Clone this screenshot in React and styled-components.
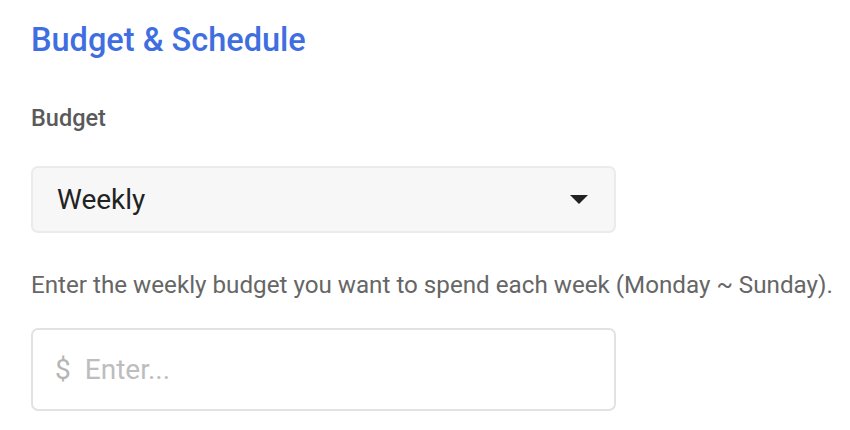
import React from 'react';
import styled, { createGlobalStyle } from 'styled-components';

const GlobalStyle = createGlobalStyle`
  body {
    margin: 0;
    background: #fff;
    font-family: Roboto, "Liberation Sans", sans-serif;
  }
`;

const Section = styled.div`
  padding: 20px 31px;
  display: flex;
  flex-direction: column;
`;

const Title = styled.h2`
  margin: 0;
  font-size: 32.5px;
  font-weight: 500;
  color: #3f6ee0;
  line-height: 40px;
`;

const Label = styled.div`
  margin-top: 46px;
  font-size: 23.5px;
  font-weight: 500;
  color: #5a5a5a;
  line-height: 24px;
`;

const Select = styled.div`
  margin-top: 36px;
  width: 585px;
  height: 67px;
  box-sizing: border-box;
  display: flex;
  align-items: center;
  justify-content: space-between;
  padding: 0 26px 0 24px;
  background: #f7f7f7;
  border: 2px solid #ebebeb;
  border-radius: 7px;
  font-size: 28px;
  color: #222;
`;

const Caret = styled.span`
  width: 0;
  height: 0;
  border-left: 9px solid transparent;
  border-right: 9px solid transparent;
  border-top: 9px solid #222;
`;

const Hint = styled.p`
  margin: 37px 0 0;
  font-size: 24.2px;
  color: #666;
  line-height: 30px;
  white-space: nowrap;
`;

const InputBox = styled.label`
  margin-top: 28px;
  width: 585px;
  height: 83px;
  box-sizing: border-box;
  display: flex;
  align-items: center;
  gap: 14px;
  padding: 0 22px;
  border: 2px solid #e2e2e2;
  border-radius: 7px;
  font-size: 28px;
  color: #b5b5b5;
`;

const Input = styled.input`
  border: none;
  outline: none;
  background: transparent;
  font: inherit;
  color: #333;
  flex: 1;
  min-width: 0;
  padding: 0;
  &::placeholder {
    color: #bdbdbd;
  }
`;

export default function App() {
  return (
    <>
      <GlobalStyle />
      <Section>
        <Title>Budget &amp; Schedule</Title>
        <Label>Budget</Label>
        <Select>
          <span>Weekly</span>
          <Caret />
        </Select>
        <Hint>Enter the weekly budget you want to spend each week (Monday ~ Sunday).</Hint>
        <InputBox>
          <span>$</span>
          <Input placeholder="Enter..." />
        </InputBox>
      </Section>
    </>
  );
}
